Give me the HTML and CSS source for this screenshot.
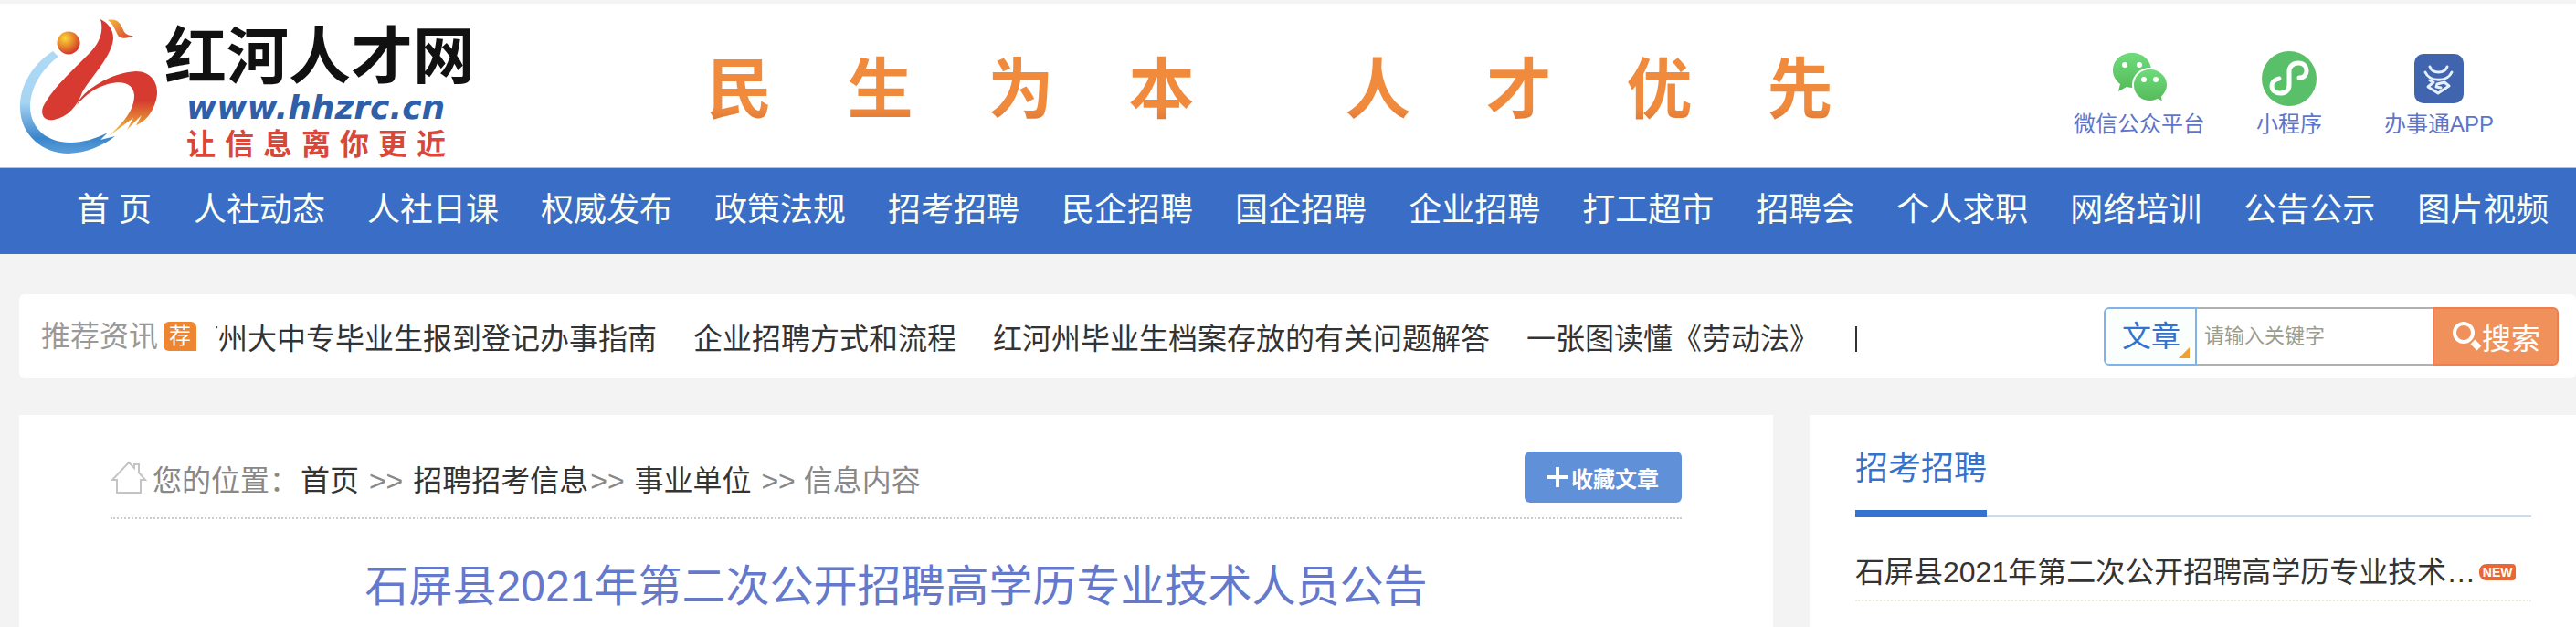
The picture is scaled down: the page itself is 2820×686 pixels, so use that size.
FILE: index.html
```html
<!DOCTYPE html>
<html lang="zh-CN">
<head>
  <meta charset="UTF-8" />
  <title>石屏县2021年第二次公开招聘高学历专业技术人员公告</title>
  <link rel="stylesheet" href="styles.css">
</head>

<body>

  <!-- Header -->
  <header class="header">
    <a class="logo" href="#">
      <svg class="logo-mark" viewBox="0 0 180 178" aria-hidden="true">
        <defs>
          <linearGradient id="arc" x1="0" y1="0" x2="0" y2="1">
            <stop offset="0" stop-color="#aedaf5" />
            <stop offset="0.5" stop-color="#a6d4f2" />
            <stop offset="0.85" stop-color="#3a85cc" />
            <stop offset="1" stop-color="#5c9fd8" />
          </linearGradient>
          <linearGradient id="ribbon" x1="0" y1="0" x2="0" y2="1">
            <stop offset="0" stop-color="#d63a31" />
            <stop offset="0.45" stop-color="#d63a31" />
            <stop offset="0.75" stop-color="#e58a33" />
            <stop offset="1" stop-color="#f6d552" />
          </linearGradient>
          <linearGradient id="feather" x1="0" y1="0" x2="1" y2="1">
            <stop offset="0" stop-color="#f3b93f" />
            <stop offset="1" stop-color="#d9412f" />
          </linearGradient>
          <radialGradient id="ball" cx="0.35" cy="0.3" r="0.7">
            <stop offset="0" stop-color="#fbd83a" />
            <stop offset="0.5" stop-color="#e88a2c" />
            <stop offset="1" stop-color="#d33a2c" />
          </radialGradient>
        </defs>
        <path fill="url(#arc)" d="M58 56C36 70 21 94 22 119C23 148 47 168 75 168C95 167 112 160 126 149L110 153L118 145C104 152 91 156 77 156C52 156 34 141 33 118C33 97 44 77 64 62Z" />
        <circle cx="75" cy="47" r="12.5" fill="url(#ball)" />
        <path fill="#d63a31" d="M110 21C118 25 124 32 124 42C123 61 100 84 90 101C85 116 74 128 59 131C49 133 44 126 47 117C59 94 84 73 100 56C109 46 114 34 110 21Z" />
        <path fill="url(#feather)" d="M118 22C128 20 132 25 135 33C137 37 140 39 146 39C141 42 134 43 130 40C126 34 125 27 118 22Z" />
        <path fill="url(#ribbon)" d="M84 115C90 99 122 79 149 78C164 78 173 89 172 103C170 120 160 133 149 137L155 126L139 142L146 129L119 149C135 134 147 121 147 104C146 93 137 87 118 92C105 96 94 103 84 115Z" />
      </svg>
      <span class="logo-text">
        <strong class="logo-name">红河人才网</strong>
        <span class="logo-url">www.hhzrc.cn</span>
        <span class="logo-tagline"><i>让</i><i>信</i><i>息</i><i>离</i><i>你</i><i>更</i><i>近</i></span>
      </span>
    </a>

    <div class="slogan">
      <div class="slogan-half"><span>民</span><span>生</span><span>为</span><span>本</span></div>
      <div class="slogan-half"><span>人</span><span>才</span><span>优</span><span>先</span></div>
    </div>

    <div class="quick-links">
      <a href="#">
        <svg viewBox="0 0 60 60" aria-hidden="true">
          <defs>
            <linearGradient id="wechat" x1="0" y1="0" x2="0" y2="1">
              <stop offset="0" stop-color="#6fdc7c" />
              <stop offset="1" stop-color="#55b959" />
            </linearGradient>
          </defs>
          <path fill="url(#wechat)" d="M22 2C10 2 1 10 1 21C1 27 4 32 9 36L7 44L16 39C32 43 43 34 43 21C43 10 34 2 22 2Z" />
          <path fill="url(#wechat)" stroke="#fff" stroke-width="2" d="M42 19C31 19 23 27 23 37C23 48 32 55 42 55C45 55 48 54 50 53L56 56L55 50C58 47 61 42 61 37C61 27 52 19 42 19Z" />
          <g fill="#fff">
            <circle cx="14" cy="15" r="3" />
            <circle cx="30" cy="15" r="3" />
            <circle cx="35" cy="31" r="3" />
            <circle cx="48" cy="31" r="3" />
          </g>
        </svg>
        微信公众平台
      </a>
      <a href="#">
        <svg viewBox="0 0 60 60" aria-hidden="true">
          <circle cx="30" cy="30" r="30" fill="#5abf69" />
          <path fill="none" stroke="#fff" stroke-width="5" stroke-linecap="round" d="M19 30C13 31 11 35 11 38C11 43 15 46 20 46C26 46 30 43 30 37V22C30 17 34 13 40 13C46 13 49 17 49 21C49 26 46 29 41 29" />
        </svg>
        小程序
      </a>
      <a href="#">
        <svg viewBox="0 0 60 60" aria-hidden="true">
          <rect x="3" y="3" width="54" height="54" rx="10" fill="#4064ae" />
          <g fill="none" stroke="#e6f0ff" stroke-width="3" stroke-linecap="round" stroke-linejoin="round">
            <path d="M20 17C23 25 36 25 39 17" />
            <path d="M15 23C20 34 39 34 44 23" />
            <path d="M20 32L24 34L18 39L29 46L41 38L36 34L28 36L27 39L32 40" />
          </g>
        </svg>
        办事通APP
      </a>
    </div>
  </header>

  <!-- Navigation -->
  <nav class="nav">
    <a href="#">首 页</a>
    <a href="#">人社动态</a>
    <a href="#">人社日课</a>
    <a href="#">权威发布</a>
    <a href="#">政策法规</a>
    <a href="#">招考招聘</a>
    <a href="#">民企招聘</a>
    <a href="#">国企招聘</a>
    <a href="#">企业招聘</a>
    <a href="#">打工超市</a>
    <a href="#">招聘会</a>
    <a href="#">个人求职</a>
    <a href="#">网络培训</a>
    <a href="#">公告公示</a>
    <a href="#">图片视频</a>
  </nav>

  <!-- Recommended news and search -->
  <section class="news-bar">
    <span class="news-title">推荐资讯</span>
    <span class="news-badge">荐</span>
    <div class="ticker">
      <div class="ticker-track">
        <a href="#">红河州大中专毕业生报到登记办事指南</a>
        <a href="#">企业招聘方式和流程</a>
        <a href="#">红河州毕业生档案存放的有关问题解答</a>
        <a href="#">一张图读懂《劳动法》</a>
        <span class="ticker-end"></span>
      </div>
    </div>
    <form class="search">
      <div class="search-type">
        <select aria-label="搜索类型">
          <option>文章</option>
        </select>
      </div>
      <input type="text" placeholder="请输入关键字" aria-label="关键字" />
      <button type="submit">
        <svg viewBox="0 0 32 32" aria-hidden="true">
          <circle cx="12" cy="12" r="10" fill="none" stroke="#fff" stroke-width="4" />
          <path d="M22 22L29 29" stroke="#fff" stroke-width="7" />
        </svg>
        搜索
      </button>
    </form>
  </section>

  <!-- Article and sidebar -->
  <div class="columns">
    <main class="article">
      <div class="breadcrumb">
        <svg viewBox="0 0 40 36" aria-hidden="true">
          <path fill="none" stroke="#c4c4c4" stroke-width="2" d="M7 21H2L20 2L26 8V4H31V13L38 21H33V35H7Z" />
        </svg>
        <p>您的位置：<a href="#">首页</a> &gt;&gt; <a href="#">招聘招考信息</a>&gt;&gt; <a href="#">事业单位</a> &gt;&gt; 信息内容</p>
        <button type="button" class="favorite">
          <svg viewBox="0 0 22 22" aria-hidden="true">
            <path d="M11 0V22M0 11H22" stroke="#fff" stroke-width="4" />
          </svg>
          收藏文章
        </button>
      </div>
      <h1>石屏县2021年第二次公开招聘高学历专业技术人员公告</h1>
    </main>

    <aside class="sidebar">
      <div class="sidebar-head">
        <h2>招考招聘</h2>
      </div>
      <ul>
        <li>
          <a href="#">石屏县2021年第二次公开招聘高学历专业技术…</a>
          <span class="new">NEW</span>
        </li>
      </ul>
    </aside>
  </div>

</body>
</html>
```
FILE: styles.css
```css
* {
  box-sizing: border-box;
}
body {
  margin: 0;
  min-height: 100vh;
  display: flex;
  flex-direction: column;
  background: #f3f3f3;
  color: #333;
  font-family: "Liberation Sans", "Noto Sans CJK SC", sans-serif;
  font-size: 32px;
  line-height: 48px;
}
a {
  color: inherit;
  text-decoration: none;
}
h1, h2, p, ul {
  margin: 0;
  padding: 0;
  font-weight: normal;
}
svg {
  flex: none;
}
button,
select,
input {
  margin: 0;
  font-family: inherit;
}

/* Header */
.header {
  display: flex;
  justify-content: space-between;
  min-height: 183px;
  border-top: 4px solid #f4f4f4;
  background: #fff;
}
.logo {
  display: flex;
  width: 520px;
}
.logo-mark {
  width: 180px;
  height: 178px;
  margin-top: -4px;
}
.logo-text {
  display: flex;
  flex-direction: column;
  padding-top: 18px;
}
.logo-name {
  color: #111;
  font-size: 68px;
  line-height: 80px;
  white-space: nowrap;
}
.logo-url {
  margin-left: 24px;
  color: #2f5fa8;
  font-family: "DejaVu Sans", sans-serif;
  font-size: 36px;
  font-style: italic;
  font-weight: bold;
  line-height: 32px;
}
.logo-tagline {
  display: flex;
  gap: 10px;
  margin-left: 24px;
  color: #d8483a;
  font-size: 32px;
}
.logo-tagline i {
  font-style: normal;
  font-weight: bold;
}
.slogan {
  display: flex;
  align-items: center;
  gap: 165px;
  padding-top: 8px;
}
.slogan-half {
  display: flex;
  gap: 82px;
}
.slogan span {
  background: linear-gradient(#f08b3e 70%, #d0692f);
  background-clip: text;
  color: transparent;
  font-size: 72px;
  font-weight: bold;
  line-height: 96px;
}
.quick-links {
  display: grid;
  grid-template-columns: repeat(3, 164px);
  margin-right: 68px;
  padding-top: 52px;
}
.quick-links a {
  display: flex;
  flex-direction: column;
  align-items: center;
  color: #5f75c9;
  font-size: 24px;
  line-height: 40px;
}
.quick-links svg {
  width: 60px;
  height: 60px;
}

/* Navigation */
.nav {
  display: flex;
  gap: 46px;
  padding: 22px 0 24px 84px;
  border-top: 1px solid #a9c3ee;
  background: #3a6dc6;
  color: #fbfff0;
  font-size: 36px;
  white-space: nowrap;
}

/* Recommended news */
.news-bar {
  display: flex;
  align-items: center;
  min-height: 92px;
  margin: 44px 0 40px 21px;
  padding: 0 19px 0 24px;
  border-radius: 6px;
  background: #fff;
}
.news-title {
  color: #999;
  white-space: nowrap;
}
.news-badge {
  width: 36px;
  margin: 0 21px 0 6px;
  border-radius: 6px 6px 0 6px;
  background: #ee8530;
  color: #fff;
  font-size: 24px;
  line-height: 32px;
  text-align: center;
}
.ticker {
  flex: 1;
  overflow: hidden;
  padding-top: 6px;
}
.ticker-track {
  display: flex;
  align-items: center;
  gap: 40px;
  margin-left: -61px;
  white-space: nowrap;
}
.ticker-end {
  width: 2px;
  height: 28px;
  background: #333;
}
.search {
  display: flex;
  height: 64px;
}
.search-type {
  position: relative;
}
.search-type::after {
  content: "";
  position: absolute;
  right: 8px;
  bottom: 8px;
  border-bottom: 12px solid #f0a030;
  border-left: 12px solid transparent;
  pointer-events: none;
}
.search select {
  width: 102px;
  height: 100%;
  padding: 0 0 0 18px;
  appearance: none;
  border: 2px solid #80b3e6;
  border-radius: 6px 0 0 6px;
  background: #fafffd;
  color: #3572cc;
  font-size: 32px;
}
.search input {
  width: 258px;
  padding: 0 8px;
  border: solid #b0b0b0;
  border-width: 2px 0;
  outline: none;
  font-size: 22px;
}
.search input::placeholder {
  color: #9a9c8c;
}
.search button {
  display: flex;
  align-items: center;
  width: 138px;
  padding: 0 0 0 20px;
  border: 2px solid #ef7f50;
  border-radius: 0 6px 6px 0;
  background: #f0915b;
  color: #fff;
  font-size: 32px;
  white-space: nowrap;
}
.search button svg {
  width: 32px;
  height: 32px;
}

/* Article and sidebar */
.columns {
  display: grid;
  flex: 1;
  grid-template-columns: 1920fr 839fr;
  gap: 40px;
  margin-left: 21px;
}
.article {
  padding: 40px 100px 0;
  background: #fff;
}
.breadcrumb {
  display: flex;
  align-items: flex-start;
  padding-bottom: 12px;
  border-bottom: 2px dotted #ccc;
  color: #888;
}
.breadcrumb > svg {
  width: 40px;
  height: 36px;
  margin: 10px 6px 0 0;
}
.breadcrumb p {
  flex: 1;
  padding-top: 4px;
  line-height: 56px;
}
.breadcrumb a {
  margin: 0 2px;
  color: #333;
}
.favorite {
  display: flex;
  align-items: center;
  justify-content: center;
  gap: 4px;
  width: 172px;
  height: 56px;
  border: none;
  border-radius: 6px;
  background: #6090d8;
  color: #fff;
  font-size: 24px;
  font-weight: bold;
}
.favorite svg {
  width: 22px;
  height: 22px;
}
.article h1 {
  margin-top: 38px;
  color: #6478cc;
  font-size: 48px;
  line-height: 72px;
  text-align: center;
}
.sidebar {
  padding: 32px 49px 0 50px;
  background: #fff;
}
.sidebar-head {
  display: flex;
  border-bottom: 2px solid #ccdcf0;
}
.sidebar-head h2 {
  margin-bottom: -2px;
  padding-bottom: 18px;
  border-bottom: 8px solid #3572d2;
  color: #3572cc;
  font-size: 36px;
  line-height: 54px;
}
.sidebar ul {
  list-style: none;
}
.sidebar li {
  display: flex;
  align-items: center;
  padding: 36px 0 6px;
  border-bottom: 2px dotted #e6e8da;
  white-space: nowrap;
}
.new {
  width: 40px;
  margin-left: 4px;
  border-radius: 8px 4px 4px 8px;
  background: #ea6632;
  color: #fff;
  font-size: 14px;
  font-weight: bold;
  line-height: 18px;
  text-align: center;
}
```
